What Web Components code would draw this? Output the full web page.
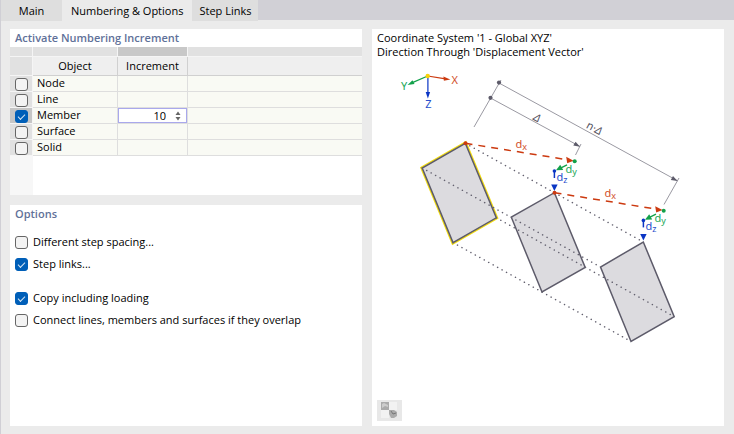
<!DOCTYPE html>
<html lang="en">
<head>
<meta charset="utf-8">
<title>Numbering &amp; Options</title>
<style>
html,body{margin:0}
body{font:11px/16px "Open Sans","Noto Sans",sans-serif;color:#000;background:#ebebeb}
</style>
</head>
<body>
<copy-dialog></copy-dialog>

<template id="t-dialog">
<style>
:host{display:flex;flex-direction:column;min-height:100vh;box-sizing:border-box;border-left:1px solid #d0cfd5;background:#ebebeb}
main{flex:1;display:grid;grid-template-columns:1fr 1fr;gap:10px;padding:8px 10px 8px 9px}
.left{display:flex;flex-direction:column;gap:10px}
ui-panel.grow{flex:1}
.options{display:flex;flex-direction:column;align-items:flex-start;gap:6px;padding:11px 5px}
.options .group{margin-top:12px}
</style>
<tab-strip>
<tab-item>Main</tab-item>
<tab-item active>Numbering &amp; Options</tab-item>
<tab-item>Step Links</tab-item>
</tab-strip>
<main>
<div class="left">
<ui-panel heading="Activate Numbering Increment"><increment-table></increment-table></ui-panel>
<ui-panel class="grow" heading="Options">
<div class="options">
<check-option>Different step spacing...</check-option>
<check-option checked>Step links...</check-option>
<check-option class="group" checked>Copy including loading</check-option>
<check-option>Connect lines, members and surfaces if they overlap</check-option>
</div>
</ui-panel>
</div>
<preview-pane></preview-pane>
</main>
</template>

<template id="t-tabs">
<style>
:host{display:flex;height:21px;background:linear-gradient(#d1d0d6 20px,#ebebeb 20px)}
</style>
<slot></slot>
</template>

<template id="t-tab">
<style>
:host{display:block}
button{height:21px;min-width:61px;padding:0 7px;border:0;background:#dedede;font:inherit;color:inherit;display:block}
:host([active]) button{background:#ebebeb;padding:0 9px}
</style>
<button type="button" role="tab"><slot></slot></button>
</template>

<template id="t-panel">
<style>
:host{display:block;background:#fff}
h2{margin:0;padding:0 5px;font-size:11px;line-height:18px;font-weight:600;color:#5f7199}
</style>
<h2></h2><slot></slot>
</template>

<template id="t-option">
<style>
:host{display:block}
label{display:flex;align-items:center;gap:5px}
</style>
<label><input type="checkbox"><slot></slot></label>
</template>

<template id="t-table">
<style>
:host{display:block}
table{width:100%;table-layout:fixed;border-collapse:separate;border-spacing:0}
th,td{padding:0;height:15px;line-height:15px;box-sizing:content-box;border-right:1px solid #dedede;border-bottom:1px solid #dedede;background:#f9faf4;font-weight:400;text-align:left}
th:last-child,td:last-child{border-right:0}
.strip th{height:9px;line-height:0;background:#e1e1e1;border-color:#f5f5f5}
.strip th.on{background:#c8c8c8}
.head th{height:18px;line-height:18px;background:#efefef;border-color:#d0d0d0;text-align:center}
tbody td:first-child,.head td:first-child{background:#e1e1e1;border-color:#f5f5f5}
tbody tr.on td:first-child{background:#c6c6c6}
td:first-child input{margin:1px 0 0 5px;display:block}
td label{display:block;padding-left:4px;line-height:14px;height:15px}
tbody tr.rest td{height:38px;background:#fff;border-color:#fff}
tbody tr.rest td:first-child{background:#f7f7f7;border-color:#f7f7f7}
.spin{display:flex;align-items:center;box-sizing:border-box;height:15px;border:1px solid #a9a8ec;background:#fff}
.spin input{flex:1;min-width:0;padding:0;border:0;margin:0;outline:0;background:none;font:inherit;line-height:13px;height:13px;text-align:right;appearance:textfield}
.spin input::-webkit-inner-spin-button{appearance:none;margin:0}
.arrows{display:flex;flex-direction:column;gap:2px;padding:0 5px 0 9px}
button{display:block;border:0;padding:0;background:none;width:6px;height:4px}
svg{display:block}
</style>
<table>
<colgroup><col style="width:23px"><col style="width:85px"><col style="width:70px"><col></colgroup>
<thead>
<tr class="strip"><th></th><th></th><th class="on"></th><th></th></tr>
<tr class="head"><td></td><th scope="col">Object</th><th scope="col">Increment</th><th></th></tr>
</thead>
<tbody>
<tr><td><input type="checkbox" id="node"></td><td><label for="node">Node</label></td><td></td><td></td></tr>
<tr><td><input type="checkbox" id="line"></td><td><label for="line">Line</label></td><td></td><td></td></tr>
<tr class="on"><td><input type="checkbox" id="member" checked></td><td><label for="member">Member</label></td><td><div class="spin"><input type="number" value="10" aria-label="Member increment"><span class="arrows"><button type="button" aria-label="Increase"><svg width="6" height="4"><path d="M.5 4L3 .5L5.5 4z" fill="#666"/></svg></button><button type="button" aria-label="Decrease"><svg width="6" height="4"><path d="M.5 0L3 3.5L5.5 0z" fill="#666"/></svg></button></span></div></td><td></td></tr>
<tr><td><input type="checkbox" id="surface"></td><td><label for="surface">Surface</label></td><td></td><td></td></tr>
<tr><td><input type="checkbox" id="solid"></td><td><label for="solid">Solid</label></td><td></td><td></td></tr>
<tr class="rest"><td></td><td></td><td></td><td></td></tr>
</tbody>
</table>
</template>

<template id="t-preview">
<style>
:host{display:flex;flex-direction:column;background:#fff}
p{margin:0;padding:2px 5px 0;line-height:14px}
.drawing{display:block;width:100%;font-family:"Noto Sans",sans-serif}
.tools{margin-top:auto;padding:5px}
button{display:block;width:25px;height:21px;padding:2px 4px;border:0;background:#e8e8e8}
button svg{display:block}
.thin{stroke:#9a99a2;stroke-width:1;fill:none}
.dots{stroke:#63616f;stroke-width:1.5;stroke-dasharray:.1 5;stroke-linecap:round;fill:none}
.box{fill:#dcdbdf;stroke:#5d5b6a;stroke-width:1.5}
.lab{font-size:11px}
.sub{font-size:9px}
</style>
<p>Coordinate System '1 - Global XYZ'<br>Direction Through 'Displacement Vector'</p>
<svg class="drawing" viewBox="372 59 352 300" role="img" aria-label="Displacement vector diagram">
<defs>
<g id="vec">
<path d="M465.5 143.3L569 160" stroke="#cc3a10" stroke-width="1.5" stroke-dasharray="7 6" fill="none"/>
<path d="M573.5 160.7L566.2 156.8L567.2 163.2z" fill="#cc3a10"/>
<circle cx="465.5" cy="143.3" r="2" fill="#cc3a10"/>
<path d="M567 164.8L561 167.8" stroke="#12a14a" stroke-width="1.5" fill="none"/>
<path d="M556 170.3L560.2 164.8L563.2 170z" fill="#12a14a"/>
<circle cx="574.7" cy="161.3" r="2" fill="#12a14a"/>
<path d="M554.4 171V178" stroke="#0a35c4" stroke-width="1.5"/>
<path d="M554.4 191L551.2 184.5H557.6z" fill="#0a35c4"/>
<circle cx="554.4" cy="171" r="1.8" fill="#0a35c4"/>
<text class="lab" x="515.5" y="147.5" fill="#d2502b">d<tspan class="sub" dy="2">x</tspan></text>
<text class="lab" x="565.5" y="172.5" fill="#23a757">d<tspan class="sub" dy="2">y</tspan></text>
<text class="lab" x="556.5" y="181" fill="#2a50cc">d<tspan class="sub" dy="2">z</tspan></text>
</g>
</defs>
<path d="M427.7 76L444 78.6" stroke="#cc3a10" stroke-width="1.2"/><path d="M450.3 79.6L443.4 76.6L443.9 80.8z" fill="#cc3a10"/>
<path d="M427.7 76L413 82.4" stroke="#12a14a" stroke-width="1.2"/><path d="M407.5 85L412.5 80.3L414.5 84z" fill="#12a14a"/>
<path d="M427.9 76V92" stroke="#0a35c4" stroke-width="1.2"/><path d="M427.9 98.5L425.7 92H430.1z" fill="#0a35c4"/>
<circle cx="427.7" cy="76" r="2.2" fill="#f8d20a"/>
<g class="lab"><text x="451.5" y="84" fill="#d2502b">X</text><text x="401" y="90" fill="#23a757">Y</text><text x="425.3" y="107.5" fill="#2a50cc">Z</text></g>
<path class="thin" d="M501 80L474 127M499 83L678 181M490.5 98L580 146.5M581 144L575.5 155M679 178L664 204.5"/>
<circle cx="499" cy="82.6" r="2.1" fill="#5d5b6a"/><circle cx="490.5" cy="97.8" r="2.1" fill="#5d5b6a"/>
<path d="M580 146.7L573.3 145.6L575.6 141.7zM677.5 181L670.8 180L673 176z" fill="#5d5b6a"/>
<text class="lab" font-style="italic" fill="#55535f" transform="translate(532.5 119.5) rotate(28.5)">Δ</text>
<text class="lab" fill="#55535f" transform="translate(585.5 127.5) rotate(28.5)">n·<tspan font-style="italic">Δ</tspan></text>
<path class="box" style="stroke:#f2dc10;stroke-width:3.6" d="M465.3 143.3L496.3 217.8L453 242.6L422.2 168z"/>
<path class="box" d="M465.3 143.3L496.3 217.8L453 242.6L422.2 168z"/>
<path class="box" d="M554.4 192.7L585.2 267.4L542 292L511.3 217.2z"/>
<path class="box" d="M643.3 242L674.2 316.7L631 341.5L600.5 267z"/>
<path class="dots" d="M465.3 143.3L643.3 242"/><path class="dots" d="M422.2 168L600.5 267"/><path class="dots" d="M496.3 217.8L674.2 316.7"/><path class="dots" d="M453 242.6L631 341.5"/>
<use href="#vec"/><use href="#vec" x="89" y="49.4"/>
</svg>
<div class="tools"><button type="button" aria-label="Change picture"><svg width="17" height="17"><path d="M0 0H8V8H0z" fill="#aaa"/><path d="M1 2L3 1L7 3V5L4 4L1 6z" fill="#ccc"/><path d="M8 0H16V8H8zM0 8H8V16H0z" fill="#f2f2f2"/><path d="M8 8H13L16 10V14L13 16H10L8 12z" fill="#aaa"/><path d="M10 9L12 12L15 11" stroke="#777" fill="none"/></svg></button></div>
</template>

<script>
const CHECK_STYLE = `
input[type=checkbox]{appearance:none;flex:none;box-sizing:border-box;width:13px;height:13px;margin:0;border:1px solid #666;border-radius:3px;background:#f3f3f3;display:block}
input[type=checkbox]:checked{background:#005fb8;border-color:#005fb8}
input[type=checkbox]:checked::after{content:"";display:block;box-sizing:border-box;width:7px;height:4px;margin:3px 0 0 2px;border:solid #d5e6f5;border-width:0 0 1px 1px;transform:rotate(-45deg)}
`;
class Base extends HTMLElement {
  constructor() {
    super();
    const root = this.attachShadow({ mode: "open" });
    root.append(document.getElementById(this.constructor.template).content.cloneNode(true));
    if (root.querySelector("input")) {
      const style = document.createElement("style");
      style.textContent = CHECK_STYLE;
      root.prepend(style);
    }
  }
}
customElements.define("tab-strip", class extends Base {
  static template = "t-tabs";
  connectedCallback() { this.setAttribute("role", "tablist"); }
});
customElements.define("tab-item", class extends Base {
  static template = "t-tab";
  connectedCallback() { this.shadowRoot.querySelector("button").setAttribute("aria-selected", this.hasAttribute("active")); }
});
customElements.define("ui-panel", class extends Base {
  static template = "t-panel";
  connectedCallback() { this.shadowRoot.querySelector("h2").textContent = this.getAttribute("heading"); }
});
customElements.define("check-option", class extends Base {
  static template = "t-option";
  connectedCallback() { this.shadowRoot.querySelector("input").checked = this.hasAttribute("checked"); }
});
customElements.define("increment-table", class extends Base {
  static template = "t-table";
  connectedCallback() {
    const field = this.shadowRoot.querySelector("input[type=number]");
    const [up, down] = this.shadowRoot.querySelectorAll("button");
    up.onclick = () => field.stepUp();
    down.onclick = () => field.stepDown();
  }
});
customElements.define("preview-pane", class extends Base { static template = "t-preview"; });
customElements.define("copy-dialog", class extends Base { static template = "t-dialog"; });
</script>
</body>
</html>
